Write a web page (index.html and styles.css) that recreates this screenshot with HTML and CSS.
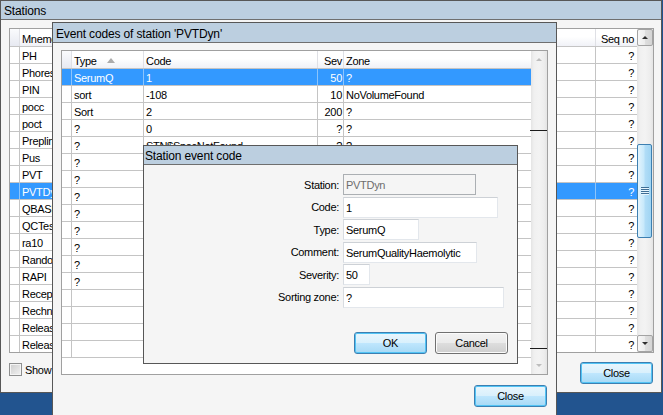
FILE: index.html
```html
<!DOCTYPE html>
<html lang="en">
<head>
<meta charset="utf-8">
<title>Stations</title>
<link rel="stylesheet" href="styles.css">
</head>
<body>
<div class="desktop">

<section class="win win-stations">
  <header class="title">Stations</header>
  <div class="wbody st-body">
    <div class="grid st-grid">
      <div class="grid-main">
        <div class="row head"><div class="c ind"></div><div class="c st-mn">Mnemonic</div><div class="c st-desc">Description</div><div class="c st-seq r">Seq no</div></div>
        <div class="row"><div class="c ind"></div><div class="c st-mn">PH</div><div class="c st-desc"></div><div class="c st-seq r">?</div></div>
        <div class="row"><div class="c ind"></div><div class="c st-mn">Phoresis</div><div class="c st-desc"></div><div class="c st-seq r">?</div></div>
        <div class="row"><div class="c ind"></div><div class="c st-mn">PIN</div><div class="c st-desc"></div><div class="c st-seq r">?</div></div>
        <div class="row"><div class="c ind"></div><div class="c st-mn">pocc</div><div class="c st-desc"></div><div class="c st-seq r">?</div></div>
        <div class="row"><div class="c ind"></div><div class="c st-mn">poct</div><div class="c st-desc"></div><div class="c st-seq r">?</div></div>
        <div class="row"><div class="c ind"></div><div class="c st-mn">Preplink</div><div class="c st-desc"></div><div class="c st-seq r">?</div></div>
        <div class="row"><div class="c ind"></div><div class="c st-mn">Pus</div><div class="c st-desc"></div><div class="c st-seq r">?</div></div>
        <div class="row"><div class="c ind"></div><div class="c st-mn">PVT</div><div class="c st-desc"></div><div class="c st-seq r">?</div></div>
        <div class="row sel"><div class="c ind"></div><div class="c st-mn">PVTDyn</div><div class="c st-desc"></div><div class="c st-seq r">?</div></div>
        <div class="row"><div class="c ind"></div><div class="c st-mn">QBASIC</div><div class="c st-desc"></div><div class="c st-seq r">?</div></div>
        <div class="row"><div class="c ind"></div><div class="c st-mn">QCTest</div><div class="c st-desc"></div><div class="c st-seq r">?</div></div>
        <div class="row"><div class="c ind"></div><div class="c st-mn">ra10</div><div class="c st-desc"></div><div class="c st-seq r">?</div></div>
        <div class="row"><div class="c ind"></div><div class="c st-mn">Random</div><div class="c st-desc"></div><div class="c st-seq r">?</div></div>
        <div class="row"><div class="c ind"></div><div class="c st-mn">RAPI</div><div class="c st-desc"></div><div class="c st-seq r">?</div></div>
        <div class="row"><div class="c ind"></div><div class="c st-mn">Reception</div><div class="c st-desc"></div><div class="c st-seq r">?</div></div>
        <div class="row"><div class="c ind"></div><div class="c st-mn">Rechner</div><div class="c st-desc"></div><div class="c st-seq r">?</div></div>
        <div class="row"><div class="c ind"></div><div class="c st-mn">Release</div><div class="c st-desc"></div><div class="c st-seq r">?</div></div>
        <div class="row"><div class="c ind"></div><div class="c st-mn">ReleaseAll</div><div class="c st-desc"></div><div class="c st-seq r">?</div></div>
      </div>
      <div class="vscroll st-scroll">
        <div class="sb-btn"><span class="tri tri-up"></span></div>
        <div class="sb-track"><div class="thumb"><span class="grip"></span></div></div>
        <div class="sb-btn"><span class="tri tri-down"></span></div>
      </div>
    </div>
    <div class="st-foot">
      <label class="chk"><span class="chk-box"></span>Show inactive stations</label>
      <button class="btn btn-default">Close</button>
    </div>
  </div>
</section>

<section class="win win-events">
  <header class="title">Event codes of station 'PVTDyn'</header>
  <div class="wbody ev-body">
    <div class="grid ev-grid">
      <div class="grid-main">
        <div class="row head"><div class="c ind"></div><div class="c ev-type">Type<span class="sort-arrow"></span></div><div class="c ev-code">Code</div><div class="c ev-sev r">Sev</div><div class="c ev-zone">Zone</div></div>
        <div class="row sel"><div class="c ind"></div><div class="c ev-type">SerumQ</div><div class="c ev-code">1</div><div class="c ev-sev r">50</div><div class="c ev-zone">?</div></div>
        <div class="row"><div class="c ind"></div><div class="c ev-type">sort</div><div class="c ev-code">-108</div><div class="c ev-sev r">10</div><div class="c ev-zone">NoVolumeFound</div></div>
        <div class="row"><div class="c ind"></div><div class="c ev-type">Sort</div><div class="c ev-code">2</div><div class="c ev-sev r">200</div><div class="c ev-zone">?</div></div>
        <div class="row"><div class="c ind"></div><div class="c ev-type">?</div><div class="c ev-code">0</div><div class="c ev-sev r">?</div><div class="c ev-zone">?</div></div>
        <div class="row"><div class="c ind"></div><div class="c ev-type">?</div><div class="c ev-code">STN$SpecNotFound</div><div class="c ev-sev r">?</div><div class="c ev-zone">?</div></div>
        <div class="row"><div class="c ind"></div><div class="c ev-type">?</div><div class="c ev-code">?</div><div class="c ev-sev r">?</div><div class="c ev-zone">?</div></div>
        <div class="row"><div class="c ind"></div><div class="c ev-type">?</div><div class="c ev-code">?</div><div class="c ev-sev r">?</div><div class="c ev-zone">?</div></div>
        <div class="row"><div class="c ind"></div><div class="c ev-type">?</div><div class="c ev-code">?</div><div class="c ev-sev r">?</div><div class="c ev-zone">?</div></div>
        <div class="row"><div class="c ind"></div><div class="c ev-type">?</div><div class="c ev-code">?</div><div class="c ev-sev r">?</div><div class="c ev-zone">?</div></div>
        <div class="row"><div class="c ind"></div><div class="c ev-type">?</div><div class="c ev-code">?</div><div class="c ev-sev r">?</div><div class="c ev-zone">?</div></div>
        <div class="row"><div class="c ind"></div><div class="c ev-type">?</div><div class="c ev-code">?</div><div class="c ev-sev r">?</div><div class="c ev-zone">?</div></div>
        <div class="row"><div class="c ind"></div><div class="c ev-type">?</div><div class="c ev-code">?</div><div class="c ev-sev r">?</div><div class="c ev-zone">?</div></div>
        <div class="row"><div class="c ind"></div><div class="c ev-type">?</div><div class="c ev-code">?</div><div class="c ev-sev r">?</div><div class="c ev-zone">?</div></div>
        <div class="row"><div class="c ind"></div><div class="c ev-type"></div><div class="c ev-code"></div><div class="c ev-sev r"></div><div class="c ev-zone"></div></div>
        <div class="row"><div class="c ind"></div><div class="c ev-type"></div><div class="c ev-code"></div><div class="c ev-sev r"></div><div class="c ev-zone"></div></div>
        <div class="row"><div class="c ind"></div><div class="c ev-type"></div><div class="c ev-code"></div><div class="c ev-sev r"></div><div class="c ev-zone"></div></div>
        <div class="row"><div class="c ind"></div><div class="c ev-type"></div><div class="c ev-code"></div><div class="c ev-sev r"></div><div class="c ev-zone"></div></div>
      </div>
      <div class="vscroll ev-scroll">
        <div class="sb-btn"><span class="tri tri-up"></span></div>
        <div class="sb-track"></div>
        <div class="sb-btn"><span class="tri tri-down"></span></div>
        <span class="glitch g1"></span>
        <span class="glitch g2"></span>
      </div>
    </div>
    <div class="ev-foot">
      <button class="btn btn-default">Close</button>
    </div>
  </div>
</section>

<section class="win win-dialog">
  <header class="title">Station event code</header>
  <div class="wbody dlg-body">
    <div class="form">
      <label class="lbl">Station:</label><input class="tb w-station" value="PVTDyn" disabled>
      <label class="lbl">Code:</label><input class="tb w-code" value="1">
      <label class="lbl">Type:</label><input class="tb w-type" value="SerumQ">
      <label class="lbl">Comment:</label><input class="tb w-comment" value="SerumQualityHaemolytic">
      <label class="lbl">Severity:</label><input class="tb w-sev" value="50">
      <label class="lbl">Sorting zone:</label><input class="tb w-zone" value="?">
    </div>
    <div class="dlg-btns">
      <button class="btn btn-default">OK</button>
      <button class="btn">Cancel</button>
    </div>
  </div>
</section>

</div>
</body>
</html>
```

FILE: styles.css
```css
* { box-sizing: border-box; }
html, body { margin: 0; padding: 0; }
body {
  width: 663px;
  height: 415px;
  overflow: hidden;
  background: #22548f;
  font-family: "Liberation Sans", Arial, sans-serif;
  font-size: 11px;
  letter-spacing: -0.3px;
  color: #000;
}
.desktop { position: relative; width: 663px; height: 415px; }

/* windows */
.win {
  position: absolute;
  display: flex;
  flex-direction: column;
  border: 1px solid #575757;
  background: #f5f5f5;
}
.win-stations { left: 0; top: 0; width: 662px; height: 393px; }
.win-events { left: 52px; top: 22px; width: 505px; height: 400px; }
.win-dialog { left: 143px; top: 145px; width: 375px; height: 219px; }

.title {
  flex: none;
  height: 19px;
  padding: 2px 0 0 3px;
  line-height: 16px;
  font-size: 12px;
  letter-spacing: -0.15px;
  background: #bccfe0;
  border-bottom: 1px solid #6f6f6f;
  white-space: nowrap;
  overflow: hidden;
}
.win-events .title { height: 20px; padding-top: 3px; }
.win-dialog .title { padding-left: 1px; }

.wbody { flex: 1; display: flex; flex-direction: column; min-height: 0; }
.st-body { padding: 8px 7px 0 8px; }
.ev-body { padding: 7px 8px 0 8px; }
.dlg-body { padding: 9px 9px 9px 0; }

/* grids */
.grid {
  flex: none;
  display: flex;
  border: 1px solid #a0a0a0;
  background: #fff;
  overflow: hidden;
}
.st-grid { width: 645px; height: 325px; }
.ev-grid { width: 487px; height: 325px; }
.grid-main { flex: 1; min-width: 0; overflow: hidden; }

.row {
  display: flex;
  height: 17px;
  border-bottom: 1px solid #c4c4c4;
  line-height: 18px;
}
.row.head {
  height: 18px;
  line-height: 20px;
  background: linear-gradient(#ffffff 45%, #f0f1f7);
}
.c {
  flex: none;
  height: 100%;
  padding-left: 2px;
  border-right: 1px solid #c4c4c4;
  overflow: hidden;
  white-space: nowrap;
}
.head .c { border-right-color: #dfe0e5; }
.c.r { text-align: right; padding: 0 3px 0 0; }
.c.ind { width: 10px; padding: 0; }
.head .c.ind { background: linear-gradient(#fafbfd, #e7e9f1); }
.row.sel { background: #3399ff; color: #fff; }
.row.sel .c { border-right-color: #8cc4fb; }

.st-mn { width: 121px; }
.st-desc { width: 455px; }
.st-seq { width: 41px; border-right: none; }
.c.st-seq { border-right: none; }

.ev-type { width: 72px; }
.ev-code { width: 174px; }
.c.ev-sev { width: 26px; padding-right: 1px; }
.c.ev-zone { width: 187px; border-right: none; }

.sort-arrow {
  display: inline-block;
  width: 0;
  height: 0;
  margin-left: 10px;
  vertical-align: 2px;
  border-left: 4px solid transparent;
  border-right: 4px solid transparent;
  border-bottom: 5px solid #acacac;
}

/* scrollbars */
.vscroll {
  position: relative;
  flex: none;
  width: 16px;
  display: flex;
  flex-direction: column;
  background: linear-gradient(to right, #e4e4e4, #f0f0f0 3px, #f3f3f3 50%, #ededed 13px, #e4e4e4);
}
.sb-btn {
  flex: none;
  height: 17px;
  display: flex;
  align-items: center;
  justify-content: center;
}
.st-scroll .sb-btn {
  border: 1px solid #a3a3a3;
  border-radius: 2px;
  background: linear-gradient(to right, #f7f7f7, #ececec 50%, #dfdfdf 50%, #d4d4d4);
}
.sb-track { flex: 1; }
.thumb {
  margin-top: 98px;
  width: 15px;
  height: 94px;
  border: 1px solid #3c7fb1;
  border-radius: 2px;
  background: linear-gradient(to right, #e3f4fd, #c8e9fb 45%, #b1ddf7 55%, #9fd4f3);
  display: flex;
  align-items: center;
  justify-content: center;
}
.grip {
  width: 8px;
  height: 8px;
  background: repeating-linear-gradient(#3e6e95 0 1px, #e6f5fd 1px 2px);
}
.tri {
  width: 0;
  height: 0;
  border-left: 3px solid transparent;
  border-right: 3px solid transparent;
}
.tri-up { border-bottom: 3px solid #2f2f2f; }
.tri-down { border-top: 3px solid #2f2f2f; }
.ev-scroll .tri-up { border-bottom-color: #bdbdbd; }
.ev-scroll .tri-down { border-top-color: #bdbdbd; }
.glitch {
  position: absolute;
  left: -1px;
  width: 17px;
  height: 1px;
  background: #1b1b1b;
}
.g1 { top: 79px; }
.g2 { top: 297px; }

/* footers */
.st-foot {
  display: flex;
  justify-content: space-between;
  align-items: flex-start;
  margin-top: 9px;
  padding-right: 1px;
}
.ev-foot {
  display: flex;
  justify-content: flex-end;
  margin-top: 10px;
  padding-right: 1px;
}
.chk {
  display: flex;
  align-items: center;
  gap: 3px;
  height: 13px;
  margin-top: 1px;
  white-space: nowrap;
}
.chk-box {
  flex: none;
  width: 13px;
  height: 13px;
  border: 1px solid #8e8f8f;
  background: linear-gradient(135deg, #cdcdcd, #f2f2f2);
  box-shadow: inset 0 0 0 1px #f4f4f4;
}

/* buttons */
.btn {
  width: 73px;
  height: 22px;
  padding: 0;
  margin: 0;
  font: inherit;
  letter-spacing: inherit;
  color: #000;
  border: 1px solid #707070;
  border-radius: 3px;
  background: linear-gradient(#f2f2f2, #ebebeb 48%, #dddddd 52%, #cfcfcf);
  box-shadow: inset 0 0 0 1px #fbfbfb;
}
.btn-default {
  border-color: #3c7fb1;
  background: linear-gradient(#e9f6fd, #d9f0fc 48%, #bee6fd 52%, #a7d9f5);
  box-shadow: inset 0 0 0 1px #52c4f5;
}

/* dialog form */
.form {
  display: grid;
  grid-template-columns: 196px max-content;
  column-gap: 3px;
  row-gap: 1.6px;
  align-items: center;
}
.lbl { text-align: right; padding-right: 1px; white-space: nowrap; }
.tb {
  display: block;
  height: 21px;
  margin: 0;
  padding: 1px 2px 0 2px;
  border: 1px solid;
  border-color: #cdd1d6 #e3e7ec #e3e7ec #d8dce1;
  background: #fff;
  font: inherit;
  letter-spacing: inherit;
  color: #000;
  outline: none;
}
.tb[disabled] {
  background: #f5f5f5;
  border-color: #abafb3;
  color: #6d6d6d;
}
.w-station { width: 133px; }
.w-code { width: 155px; }
.w-type { width: 76px; }
.w-comment { width: 134px; }
.w-sev { width: 27px; }
.w-zone { width: 161px; }
.dlg-btns {
  margin-top: auto;
  display: flex;
  justify-content: flex-end;
  gap: 8px;
}
```
